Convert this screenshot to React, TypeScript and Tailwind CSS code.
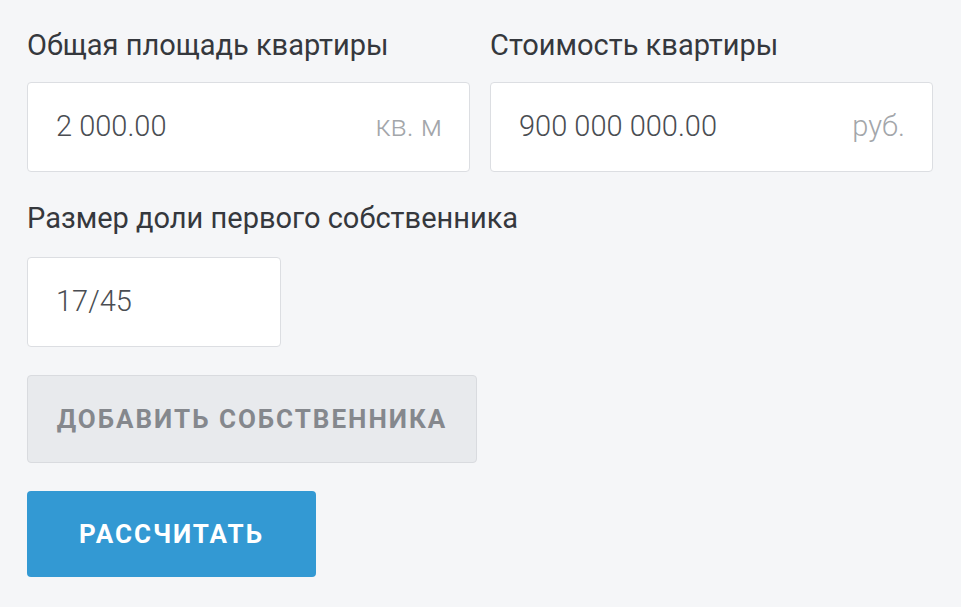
import React from "react";

export default function App() {
  return (
    <div
      className="min-h-[607px] w-full bg-[#f5f6f8] pl-[27px] pr-[28px] pt-[28px]"
      style={{ fontFamily: "Roboto, 'Noto Sans', sans-serif" }}
    >
      <div className="grid grid-cols-2 gap-x-[20px]">
        <div className="flex flex-col">
          <label className="text-[29px] leading-[34px] text-[#35383d]">Общая площадь квартиры</label>
          <div className="mt-[20px] flex h-[90px] items-center justify-between rounded-[4px] border border-[#dcdee2] bg-white pl-[28px] pr-[27px]">
            <span className="text-[29px] font-light text-[#4a4d52]">2 000.00</span>
            <span className="text-[29px] font-light text-[#a3a6aa]">кв. м</span>
          </div>
        </div>
        <div className="flex flex-col">
          <label className="text-[29px] leading-[34px] text-[#35383d]">Стоимость квартиры</label>
          <div className="mt-[20px] flex h-[90px] items-center justify-between rounded-[4px] border border-[#dcdee2] bg-white pl-[28px] pr-[27px]">
            <span className="text-[29px] font-light text-[#4a4d52]">900 000 000.00</span>
            <span className="text-[29px] font-light text-[#a3a6aa]">руб.</span>
          </div>
        </div>
      </div>
      <label className="mt-[29px] block text-[29px] leading-[34px] text-[#35383d]">Размер доли первого собственника</label>
      <div className="mt-[22px] flex h-[90px] w-[254px] items-center rounded-[4px] border border-[#dcdee2] bg-white pl-[28px]">
        <span className="text-[29px] font-light text-[#4a4d52]">17/45</span>
      </div>
      <button className="mt-[28px] flex h-[88px] w-[450px] items-center justify-center rounded-[4px] border border-[#d9dbdf] bg-[#e8eaed] text-[26px] font-bold uppercase tracking-[2px] text-[#85888d]">
        Добавить собственника
      </button>
      <button className="mt-[28px] flex h-[86px] w-[289px] items-center justify-center rounded-[4px] bg-[#3399d3] text-[26px] font-bold uppercase tracking-[2px] text-white">
        Рассчитать
      </button>
    </div>
  );
}
